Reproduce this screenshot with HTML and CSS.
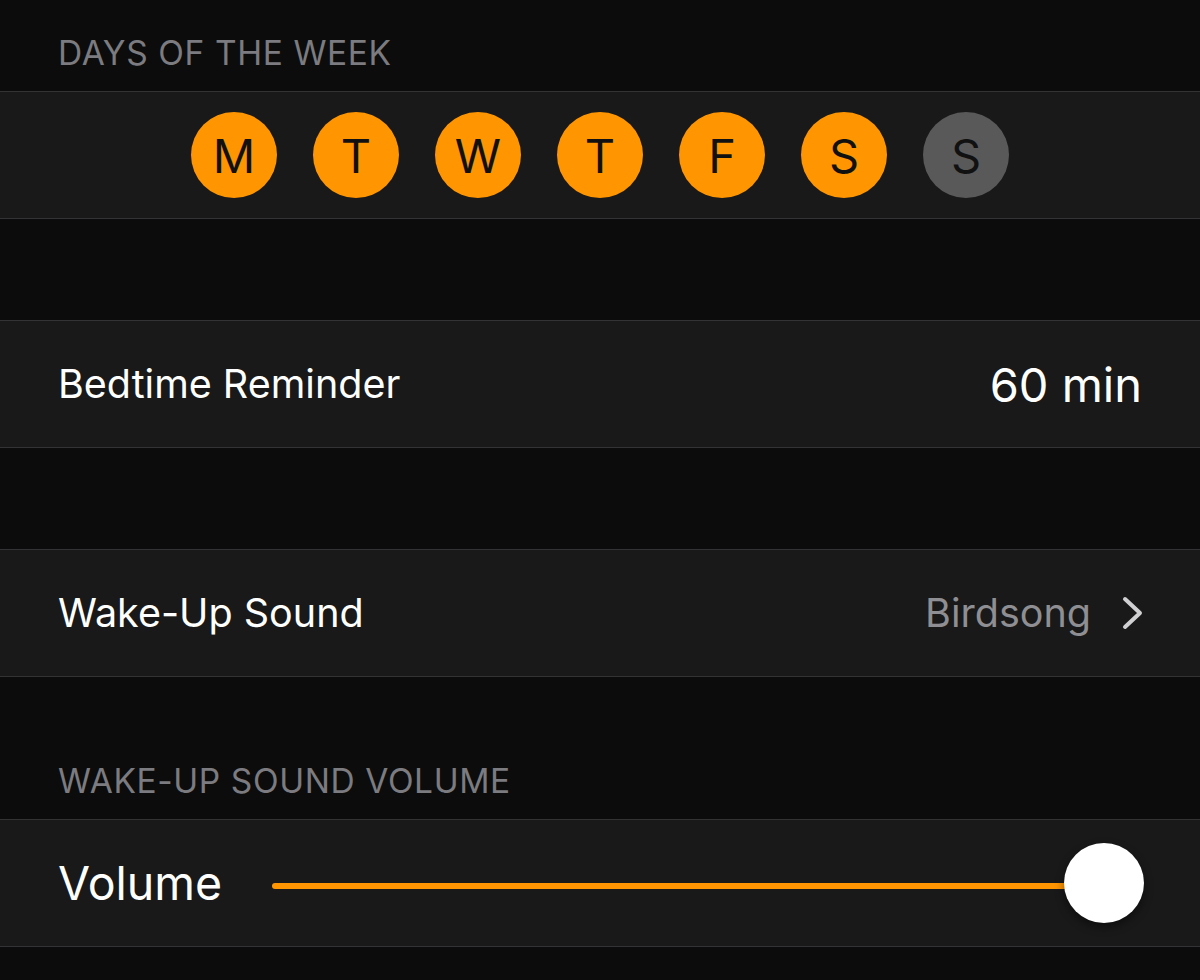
FILE: index.html
```html
<!DOCTYPE html>
<html>
<head>
<meta charset="utf-8">
<link rel="stylesheet" href="styles.css">
</head>
<body>
<div class="screen">
  <div class="header header-top"><span>DAYS OF THE WEEK</span></div>
  <div class="row days">
    <div class="day on">M</div>
    <div class="day on">T</div>
    <div class="day on">W</div>
    <div class="day on">T</div>
    <div class="day on">F</div>
    <div class="day on">S</div>
    <div class="day off">S</div>
  </div>
  <div class="spacer"></div>
  <div class="row cell">
    <span class="label">Bedtime Reminder</span>
    <span class="value-big">60 min</span>
  </div>
  <div class="spacer"></div>
  <div class="row cell">
    <span class="label">Wake-Up Sound</span>
    <span class="detail">Birdsong
      <svg class="chev" width="24" height="34" viewBox="0 0 24 34"><path d="M4 3 L19 17 L4 31" fill="none" stroke="#d0d0d3" stroke-width="4" stroke-linecap="round" stroke-linejoin="round"/></svg>
    </span>
  </div>
  <div class="header header-vol"><span>WAKE-UP SOUND VOLUME</span></div>
  <div class="row cell vol">
    <span class="label label-vol">Volume</span>
    <div class="slider">
      <div class="track"></div>
      <div class="knob"></div>
    </div>
  </div>
</div>
</body>
</html>
```

FILE: styles.css
```css
html, body {
  margin: 0;
  padding: 0;
  background: #0c0c0c;
}
.screen {
  width: 1200px;
  height: 980px;
  overflow: hidden;
  background: #0c0c0c;
  font-family: "Inter", "Liberation Sans", sans-serif;
  color: #fff;
}
.header {
  box-sizing: border-box;
  display: flex;
  align-items: flex-end;
  padding-left: 58px;
  color: #7b7b80;
  font-size: 33.5px;
  letter-spacing: 0.6px;
}
.header-top {
  height: 91px;
  padding-bottom: 18px;
}
.header-vol {
  height: 142px;
  padding-bottom: 18px;
}
.row {
  box-sizing: border-box;
  height: 128px;
  background: #191919;
  border-top: 1px solid #333335;
  border-bottom: 1px solid #333335;
}
.spacer {
  height: 101px;
}
.days {
  display: flex;
  justify-content: center;
  align-items: center;
  gap: 36px;
}
.day {
  width: 86px;
  height: 86px;
  border-radius: 50%;
  display: flex;
  align-items: center;
  justify-content: center;
  font-size: 47px;
  color: #111;
}
.day.on { background: #ff9500; }
.day.off { background: #595959; }
.cell {
  display: flex;
  align-items: center;
  justify-content: space-between;
  padding: 0 58px 0 58px;
}
.label {
  font-size: 39.5px;
  color: #fff;
}
.value-big {
  font-size: 47px;
  color: #fff;
}
.detail {
  display: flex;
  align-items: center;
  gap: 30px;
  font-size: 39.5px;
  color: #8e8e93;
}
.chev {
  display: block;
  margin-right: -3px;
}
.vol {
  justify-content: flex-start;
  gap: 50px;
}
.label-vol {
  font-size: 46.5px;
}
.slider {
  flex: 1;
  position: relative;
  height: 80px;
  display: flex;
  align-items: center;
}
.track {
  flex: 1;
  height: 6px;
  border-radius: 3px;
  background: #ff9500;
  margin-right: 40px;
  margin-top: 6px;
}
.knob {
  position: absolute;
  right: -2px;
  top: 0;
  width: 80px;
  height: 80px;
  border-radius: 50%;
  background: #fff;
  box-shadow: 0 4px 10px rgba(0,0,0,0.45);
}
```
